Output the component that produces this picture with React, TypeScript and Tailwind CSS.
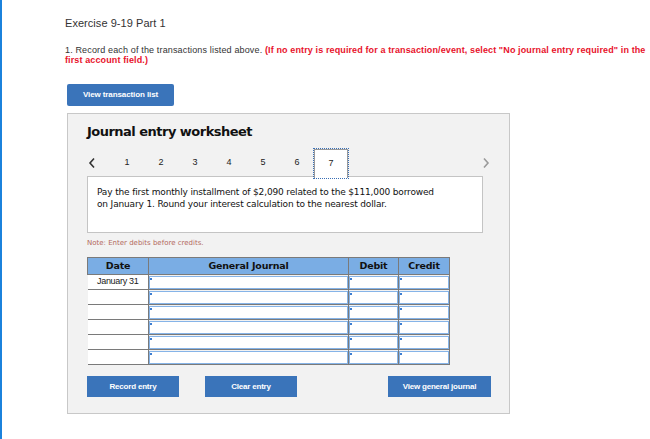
import React from "react"

const arial = "font-['Liberation_Sans',Arial,sans-serif]"
const verdana = "font-['DejaVu_Sans',Verdana,sans-serif]"

function Chevron({ dir, color }: { dir: "left" | "right"; color: string }) {
  return (
    <svg width="8" height="12" viewBox="0 0 8 12" fill="none">
      <polyline
        points={dir === "left" ? "6,1.5 2,6 6,10.5" : "2,1.5 6,6 2,10.5"}
        stroke={color}
        strokeWidth="1.6"
      />
    </svg>
  )
}

function InputCell() {
  return (
    <td className="border border-[#7a7a7a] p-0 h-[15px]">
      <div className="relative h-[13px] border border-[#86b4e8] bg-white">
        <span className="absolute left-0 top-[1px] w-[2px] h-[2px] bg-[#3d7dd0]" />
      </div>
    </td>
  )
}

export default function App() {
  const tabs = ["1", "2", "3", "4", "5", "6", "7"]
  const rows = ["January 31", "", "", "", "", ""]

  return (
    <div className="w-[650px] h-[439px] bg-white border-l-2 border-[#1b82dc] overflow-hidden">
      <div className="pl-[63px] pt-[16px]">
        {/* heading */}
        <h1 className={`${arial} text-[11px] leading-[14px] text-[#333] tracking-[0.05px]`}>
          Exercise 9-19 Part 1
        </h1>

        <p className={`${arial} mt-[15px] text-[9px] leading-[10px] text-[#333] whitespace-nowrap tracking-[0.15px]`}>
          1. Record each of the transactions listed above.{" "}
          <span className="text-[#e8122b] font-bold tracking-[0.12px]">
            (If no entry is required for a transaction/event, select "No journal entry required" in the
            <br />
            first account field.)
          </span>
        </p>

        <button
          className={`${arial} mt-[19px] ml-[2px] w-[107px] h-[22px] rounded-[2px] bg-[#3a74ba] text-white text-[8px] font-bold tracking-[-0.1px] flex items-center justify-center`}
        >
          View transaction list
        </button>

        {/* worksheet panel */}
        <div className="mt-[7px] ml-[2px] w-[443px] h-[301px] border border-[#c8c8c8] bg-[#f2f2f2] pl-[19px] pt-[10px]">
          <h2 className={`${verdana} text-[13px] leading-[16px] font-bold text-[#111] tracking-[-0.52px]`}>
            Journal entry worksheet
          </h2>

          <div className="mt-[9px] w-[403px] h-[28px] flex items-center">
            <div className="w-[23px] h-full flex items-center pl-[1px]">
              <Chevron dir="left" color="#333" />
            </div>
            {tabs.map((t) =>
              t === "7" ? (
                <div
                  key={t}
                  className={`${arial} relative z-10 w-[34px] h-[29px] self-start bg-white border-x border-t border-[#9a9a9a] outline-1 outline-dotted outline-[#3a6fb5] text-[9px] text-[#222] flex items-center justify-center`}
                >
                  {t}
                </div>
              ) : (
                <div
                  key={t}
                  className={`${arial} w-[34px] h-full text-[9px] text-[#222] flex items-center justify-center`}
                >
                  {t}
                </div>
              )
            )}
            <div className="ml-auto flex items-center">
              <Chevron dir="right" color="#9a9a9a" />
            </div>
          </div>

          <div className="-mt-[1px] w-[396px] h-[57px] bg-white border border-[#c4c4c4] pl-[9px] pt-[9px]">
            <p className={`${verdana} text-[9px] leading-[12px] text-[#111] tracking-[-0.15px]`}>
              Pay the first monthly installment of $2,090 related to the $111,000 borrowed
              <br />
              on January 1. Round your interest calculation to the nearest dollar.
            </p>
          </div>

          <p className={`${verdana} mt-[5px] text-[7px] leading-[10px] text-[#b36a5e]`}>
            Note: Enter debits before credits.
          </p>

          <table className="mt-[9px] border-collapse table-fixed w-[362px]">
            <colgroup>
              <col className="w-[61px]" />
              <col className="w-[200px]" />
              <col className="w-[50px]" />
              <col className="w-[51px]" />
            </colgroup>
            <thead>
              <tr className="h-[17px] bg-[#7aade4]">
                {["Date", "General Journal", "Debit", "Credit"].map((h) => (
                  <th
                    key={h}
                    className={`${verdana} border border-[#7a7a7a] p-0 text-[9.5px] font-bold text-[#111] text-center tracking-[-0.2px]`}
                  >
                    {h}
                  </th>
                ))}
              </tr>
            </thead>
            <tbody>
              {rows.map((d, i) => (
                <tr key={i} className="h-[15px]">
                  <td
                    className={`${arial} bg-white border-b border-r border-[#7a7a7a] p-0 text-[9px] text-[#222] text-center tracking-[-0.3px]`}
                  >
                    {d}
                  </td>
                  <InputCell />
                  <InputCell />
                  <InputCell />
                </tr>
              ))}
            </tbody>
          </table>

          <div className="mt-[11px] flex w-[404px]">
            <button
              className={`${arial} w-[92px] h-[21px] bg-[#3a74ba] text-white text-[8px] font-bold tracking-[-0.2px] flex items-center justify-center`}
            >
              Record entry
            </button>
            <button
              className={`${arial} ml-[26px] w-[92px] h-[21px] bg-[#3a74ba] text-white text-[8px] font-bold tracking-[-0.2px] flex items-center justify-center`}
            >
              Clear entry
            </button>
            <button
              className={`${arial} ml-auto w-[103px] h-[21px] bg-[#3a74ba] text-white text-[8px] font-bold tracking-[-0.2px] flex items-center justify-center`}
            >
              View general journal
            </button>
          </div>
        </div>
      </div>
    </div>
  )
}
